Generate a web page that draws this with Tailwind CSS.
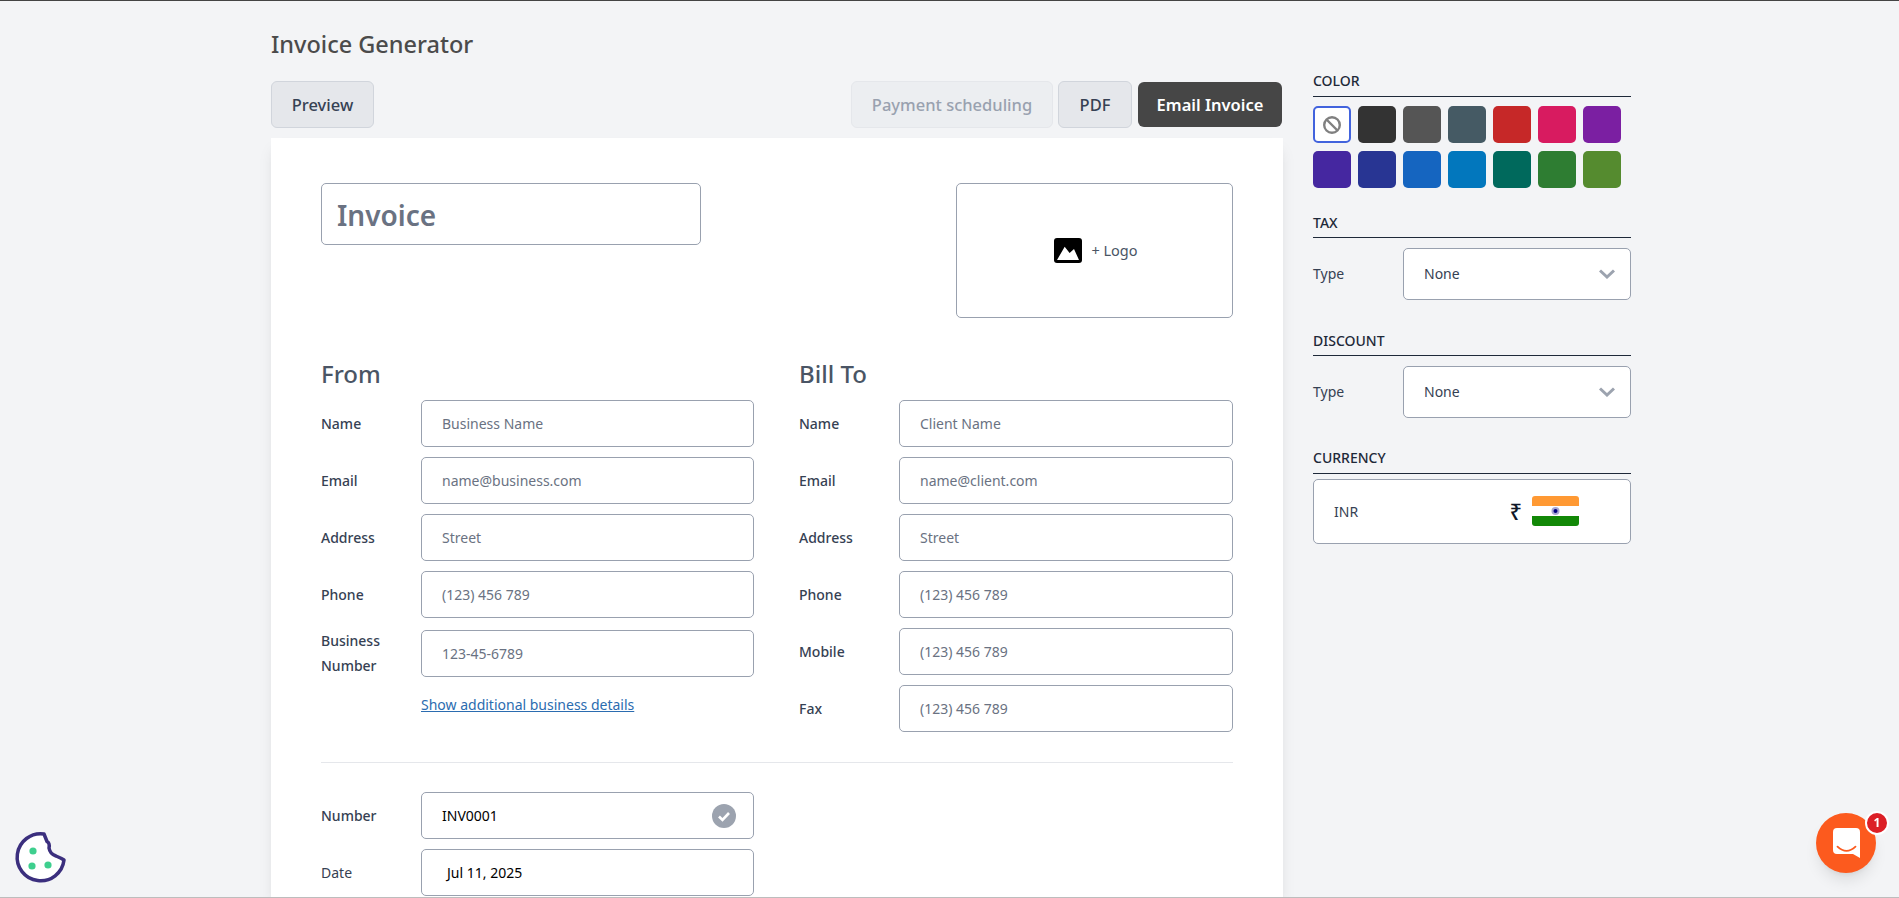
<!DOCTYPE html>
<html lang="en">

<head>
    <meta charset="UTF-8">
    <meta name="viewport" content="width=device-width, initial-scale=1.0">
    <title>Invoice Generator</title>
    <script src="https://cdn.jsdelivr.net/npm/@tailwindcss/browser@4"></script>
</head>

<body class="h-[898px] overflow-hidden bg-[#f3f4f6] font-['Noto_Sans',sans-serif] text-sm text-gray-700">

    <div class="h-px bg-[#444444]"></div>

    <div class="flex pl-[271px]">
        <!-- Main column -->
        <main class="w-[1012px]">
            <h1 class="mt-[28px] h-[31px] text-[23.5px] font-medium leading-[31px] text-[#4b4b4b]">Invoice Generator</h1>

            <!-- Toolbar -->
            <div class="mt-[21px] flex h-[47px] items-center pr-px">
                <button class="h-[47px] w-[103px] rounded-md border border-gray-300 bg-gray-200 text-[16.5px] font-medium text-gray-700">Preview</button>
                <button class="ml-auto h-[47px] w-[202px] rounded-md border border-gray-200 bg-[#eceef1] text-[16.5px] font-medium text-gray-400">Payment scheduling</button>
                <button class="ml-[5px] h-[47px] w-[74px] rounded-md border border-gray-300 bg-gray-200 text-[16.5px] font-medium text-gray-700">PDF</button>
                <button class="ml-[6px] h-[45px] w-[144px] rounded-md bg-[#464646] text-[16.5px] font-semibold text-white">Email Invoice</button>
            </div>

            <!-- Invoice card -->
            <section class="mt-[10px] h-[760px] bg-white px-[50px] pt-[45px] shadow-lg">
                <div class="flex items-start justify-between">
                    <input type="text" placeholder="Invoice" class="h-[62px] w-[380px] rounded-[5px] border border-gray-400 px-[15px] pt-[2px] text-[28px] font-semibold placeholder:text-gray-500">
                    <div class="flex h-[135px] w-[277px] items-center justify-center rounded-[5px] border border-gray-400 pl-[3px]">
                        <svg class="h-[25px] w-[28px]" viewBox="0 0 28 25">
                            <rect width="28" height="25" rx="3" fill="#000" />
                            <path d="M3 22L10.700 8.700L15.600 15L20 11L25 22Z" fill="#fff" />
                        </svg>
                        <span class="ml-[9px] text-[14.5px] text-gray-600">+ Logo</span>
                    </div>
                </div>

                <div class="mt-[39px] flex gap-[45px]">
                    <!-- From -->
                    <div class="w-[433px]">
                        <h2 class="mb-[9px] h-[34px] text-2xl font-medium leading-[34px] text-gray-600">From</h2>
                        <div class="mb-[10px] flex items-center">
                            <label class="w-[100px] font-medium">Name</label>
                            <input type="text" placeholder="Business Name" class="h-[47px] flex-1 rounded-[5px] border border-gray-400 px-5 placeholder:text-gray-500">
                        </div>
                        <div class="mb-[10px] flex items-center">
                            <label class="w-[100px] font-medium">Email</label>
                            <input type="text" placeholder="name@business.com" class="h-[47px] flex-1 rounded-[5px] border border-gray-400 px-5 placeholder:text-gray-500">
                        </div>
                        <div class="mb-[10px] flex items-center">
                            <label class="w-[100px] font-medium">Address</label>
                            <input type="text" placeholder="Street" class="h-[47px] flex-1 rounded-[5px] border border-gray-400 px-5 placeholder:text-gray-500">
                        </div>
                        <div class="mb-[10px] flex items-center">
                            <label class="w-[100px] font-medium">Phone</label>
                            <input type="text" placeholder="(123) 456 789" class="h-[47px] flex-1 rounded-[5px] border border-gray-400 px-5 placeholder:text-gray-500">
                        </div>
                        <div class="mb-[17px] flex items-center">
                            <label class="w-[100px] font-medium leading-[25px]">Business<br>Number</label>
                            <input type="text" placeholder="123-45-6789" class="h-[47px] flex-1 rounded-[5px] border border-gray-400 px-5 placeholder:text-gray-500">
                        </div>
                        <a href="#" class="ml-[100px] block text-[#2b6cb0] underline">Show additional business details</a>
                    </div>

                    <!-- Bill To -->
                    <div class="w-[434px]">
                        <h2 class="mb-[9px] h-[34px] text-2xl font-medium leading-[34px] text-gray-600">Bill To</h2>
                        <div class="mb-[10px] flex items-center">
                            <label class="w-[100px] font-medium">Name</label>
                            <input type="text" placeholder="Client Name" class="h-[47px] flex-1 rounded-[5px] border border-gray-400 px-5 placeholder:text-gray-500">
                        </div>
                        <div class="mb-[10px] flex items-center">
                            <label class="w-[100px] font-medium">Email</label>
                            <input type="text" placeholder="name@client.com" class="h-[47px] flex-1 rounded-[5px] border border-gray-400 px-5 placeholder:text-gray-500">
                        </div>
                        <div class="mb-[10px] flex items-center">
                            <label class="w-[100px] font-medium">Address</label>
                            <input type="text" placeholder="Street" class="h-[47px] flex-1 rounded-[5px] border border-gray-400 px-5 placeholder:text-gray-500">
                        </div>
                        <div class="mb-[10px] flex items-center">
                            <label class="w-[100px] font-medium">Phone</label>
                            <input type="text" placeholder="(123) 456 789" class="h-[47px] flex-1 rounded-[5px] border border-gray-400 px-5 placeholder:text-gray-500">
                        </div>
                        <div class="mb-[10px] flex items-center">
                            <label class="w-[100px] font-medium">Mobile</label>
                            <input type="text" placeholder="(123) 456 789" class="h-[47px] flex-1 rounded-[5px] border border-gray-400 px-5 placeholder:text-gray-500">
                        </div>
                        <div class="flex items-center">
                            <label class="w-[100px] font-medium">Fax</label>
                            <input type="text" placeholder="(123) 456 789" class="h-[47px] flex-1 rounded-[5px] border border-gray-400 px-5 placeholder:text-gray-500">
                        </div>
                    </div>
                </div>

                <hr class="mt-[30px] border-gray-200">

                <!-- Invoice details -->
                <div class="mt-[29px] w-[433px]">
                    <div class="mb-[10px] flex items-center">
                        <label class="w-[100px] font-medium">Number</label>
                        <div class="flex h-[47px] flex-1 items-center justify-between rounded-[5px] border border-gray-400 pl-5 pr-[17px] text-black">
                            <span>INV0001</span>
                            <svg class="h-6 w-6" viewBox="0 0 24 24">
                                <circle cx="12" cy="12" r="12" fill="#9ca3af" />
                                <path d="M7 12.500L10.500 16L17 9" fill="none" stroke="#fff" stroke-width="2.6" />
                            </svg>
                        </div>
                    </div>
                    <div class="flex items-center">
                        <label class="w-[100px]">Date</label>
                        <div class="flex h-[47px] flex-1 items-center rounded-[5px] border border-gray-400 pl-[25px] text-black">Jul 11, 2025</div>
                    </div>
                </div>
            </section>
        </main>

        <!-- Settings sidebar -->
        <aside class="ml-[30px] w-[318px]">
            <h3 class="mt-[70px] h-[26px] border-b border-gray-800 text-sm font-medium uppercase leading-[20px] text-gray-800">Color</h3>
            <div class="mt-[9px] grid w-[308px] grid-cols-7 gap-x-[7px] gap-y-2">
                <div class="flex h-[37px] w-[38px] items-center justify-center rounded-[5px] border-2 border-[#4263dd] bg-white">
                    <svg class="h-5 w-5" viewBox="0 0 20 20" fill="none" stroke="#808080" stroke-width="2.4">
                        <circle cx="10" cy="10" r="7.800" />
                        <path d="M4.500 4.500L15.500 15.500" />
                    </svg>
                </div>
                <div class="h-[37px] w-[38px] rounded-[5px] bg-[#333333]"></div>
                <div class="h-[37px] w-[38px] rounded-[5px] bg-[#555555]"></div>
                <div class="h-[37px] w-[38px] rounded-[5px] bg-[#455a64]"></div>
                <div class="h-[37px] w-[38px] rounded-[5px] bg-[#c62828]"></div>
                <div class="h-[37px] w-[38px] rounded-[5px] bg-[#d81b60]"></div>
                <div class="h-[37px] w-[38px] rounded-[5px] bg-[#7b1fa2]"></div>
                <div class="h-[37px] w-[38px] rounded-[5px] bg-[#4527a0]"></div>
                <div class="h-[37px] w-[38px] rounded-[5px] bg-[#283593]"></div>
                <div class="h-[37px] w-[38px] rounded-[5px] bg-[#1565c0]"></div>
                <div class="h-[37px] w-[38px] rounded-[5px] bg-[#0277bd]"></div>
                <div class="h-[37px] w-[38px] rounded-[5px] bg-[#00695c]"></div>
                <div class="h-[37px] w-[38px] rounded-[5px] bg-[#2e7d32]"></div>
                <div class="h-[37px] w-[38px] rounded-[5px] bg-[#558b2f]"></div>
            </div>

            <h3 class="mt-[25px] h-[25px] border-b border-gray-800 text-sm font-medium uppercase leading-[20px] text-gray-800">Tax</h3>
            <div class="mt-[10px] flex items-center">
                <span class="w-[90px]">Type</span>
                <div class="flex h-[52px] flex-1 items-center justify-between rounded-[5px] border border-gray-400 bg-white pl-5 pr-[15px]">
                    <span>None</span>
                    <svg class="h-[10px] w-4" viewBox="0 0 16 10" fill="none" stroke="#9ca3af" stroke-width="3">
                        <path d="M1 1.500L8 8L15 1.500" />
                    </svg>
                </div>
            </div>

            <h3 class="mt-[31px] h-[25px] border-b border-gray-800 text-sm font-medium uppercase leading-[20px] text-gray-800">Discount</h3>
            <div class="mt-[10px] flex items-center">
                <span class="w-[90px]">Type</span>
                <div class="flex h-[52px] flex-1 items-center justify-between rounded-[5px] border border-gray-400 bg-white pl-5 pr-[15px]">
                    <span>None</span>
                    <svg class="h-[10px] w-4" viewBox="0 0 16 10" fill="none" stroke="#9ca3af" stroke-width="3">
                        <path d="M1 1.500L8 8L15 1.500" />
                    </svg>
                </div>
            </div>

            <h3 class="mt-[30px] h-[26px] border-b border-gray-800 text-sm font-medium uppercase leading-[20px] text-gray-800">Currency</h3>
            <div class="mt-[5px] flex h-[65px] items-center rounded-[5px] border border-gray-400 bg-white pl-[20px] pr-[51px]">
                <span>INR</span>
                <span class="ml-auto text-[22px] font-medium text-gray-900">₹</span>
                <svg class="ml-[10px] mb-px h-[30px] w-[47px] rounded-[3px]" viewBox="0 0 47 30">
                    <rect width="47" height="10" fill="#ff9933" />
                    <rect y="10" width="47" height="10" fill="#fff" />
                    <rect y="20" width="47" height="10" fill="#128807" />
                    <circle cx="23.500" cy="15" r="4" fill="#000080" fill-opacity="0.35" />
                    <circle cx="23.500" cy="15" r="2" fill="#000080" />
                </svg>
            </div>
        </aside>
    </div>

    <!-- Cookie settings button -->
    <svg class="fixed left-[12px] top-[830px] h-[56px] w-[56px]" viewBox="12 20 56 56">
        <path d="M44 24L47 31.500Q50 33 49 38Q50 44 56 46Q61 48 64 50A23.500 23.500 0 1 1 44 24Z" fill="#fff" stroke="#3b2f7e" stroke-width="3.5" stroke-linejoin="round" />
        <circle cx="33" cy="41" r="3.600" fill="#3ecf8e" />
        <circle cx="32" cy="56" r="3.600" fill="#3ecf8e" />
        <circle cx="48" cy="55" r="3.600" fill="#3ecf8e" />
    </svg>

    <!-- Chat launcher -->
    <div class="fixed left-[1816px] top-[813px] flex h-[60px] w-[60px] items-center justify-center rounded-full bg-[#fc5a1e] shadow-lg">
        <svg class="h-[30px] w-[27px]" viewBox="0 0 27 30">
            <path d="M4 0H23A4 4 0 0 1 27 4V30L20 26H4A4 4 0 0 1 0 22V4A4 4 0 0 1 4 0Z" fill="#fff" />
            <path d="M4.500 18.700Q13.500 27 22.500 18.700" fill="none" stroke="#fc5a1e" stroke-width="1.800" stroke-linecap="round" />
        </svg>
    </div>
    <div class="fixed left-[1865px] top-[811px] flex h-6 w-6 items-center justify-center rounded-full border-2 border-white bg-[#dc1f26] text-xs font-bold text-white">1</div>

    <div class="fixed bottom-0 left-0 h-px w-full bg-[#bdbdbd]"></div>

</body>

</html>
